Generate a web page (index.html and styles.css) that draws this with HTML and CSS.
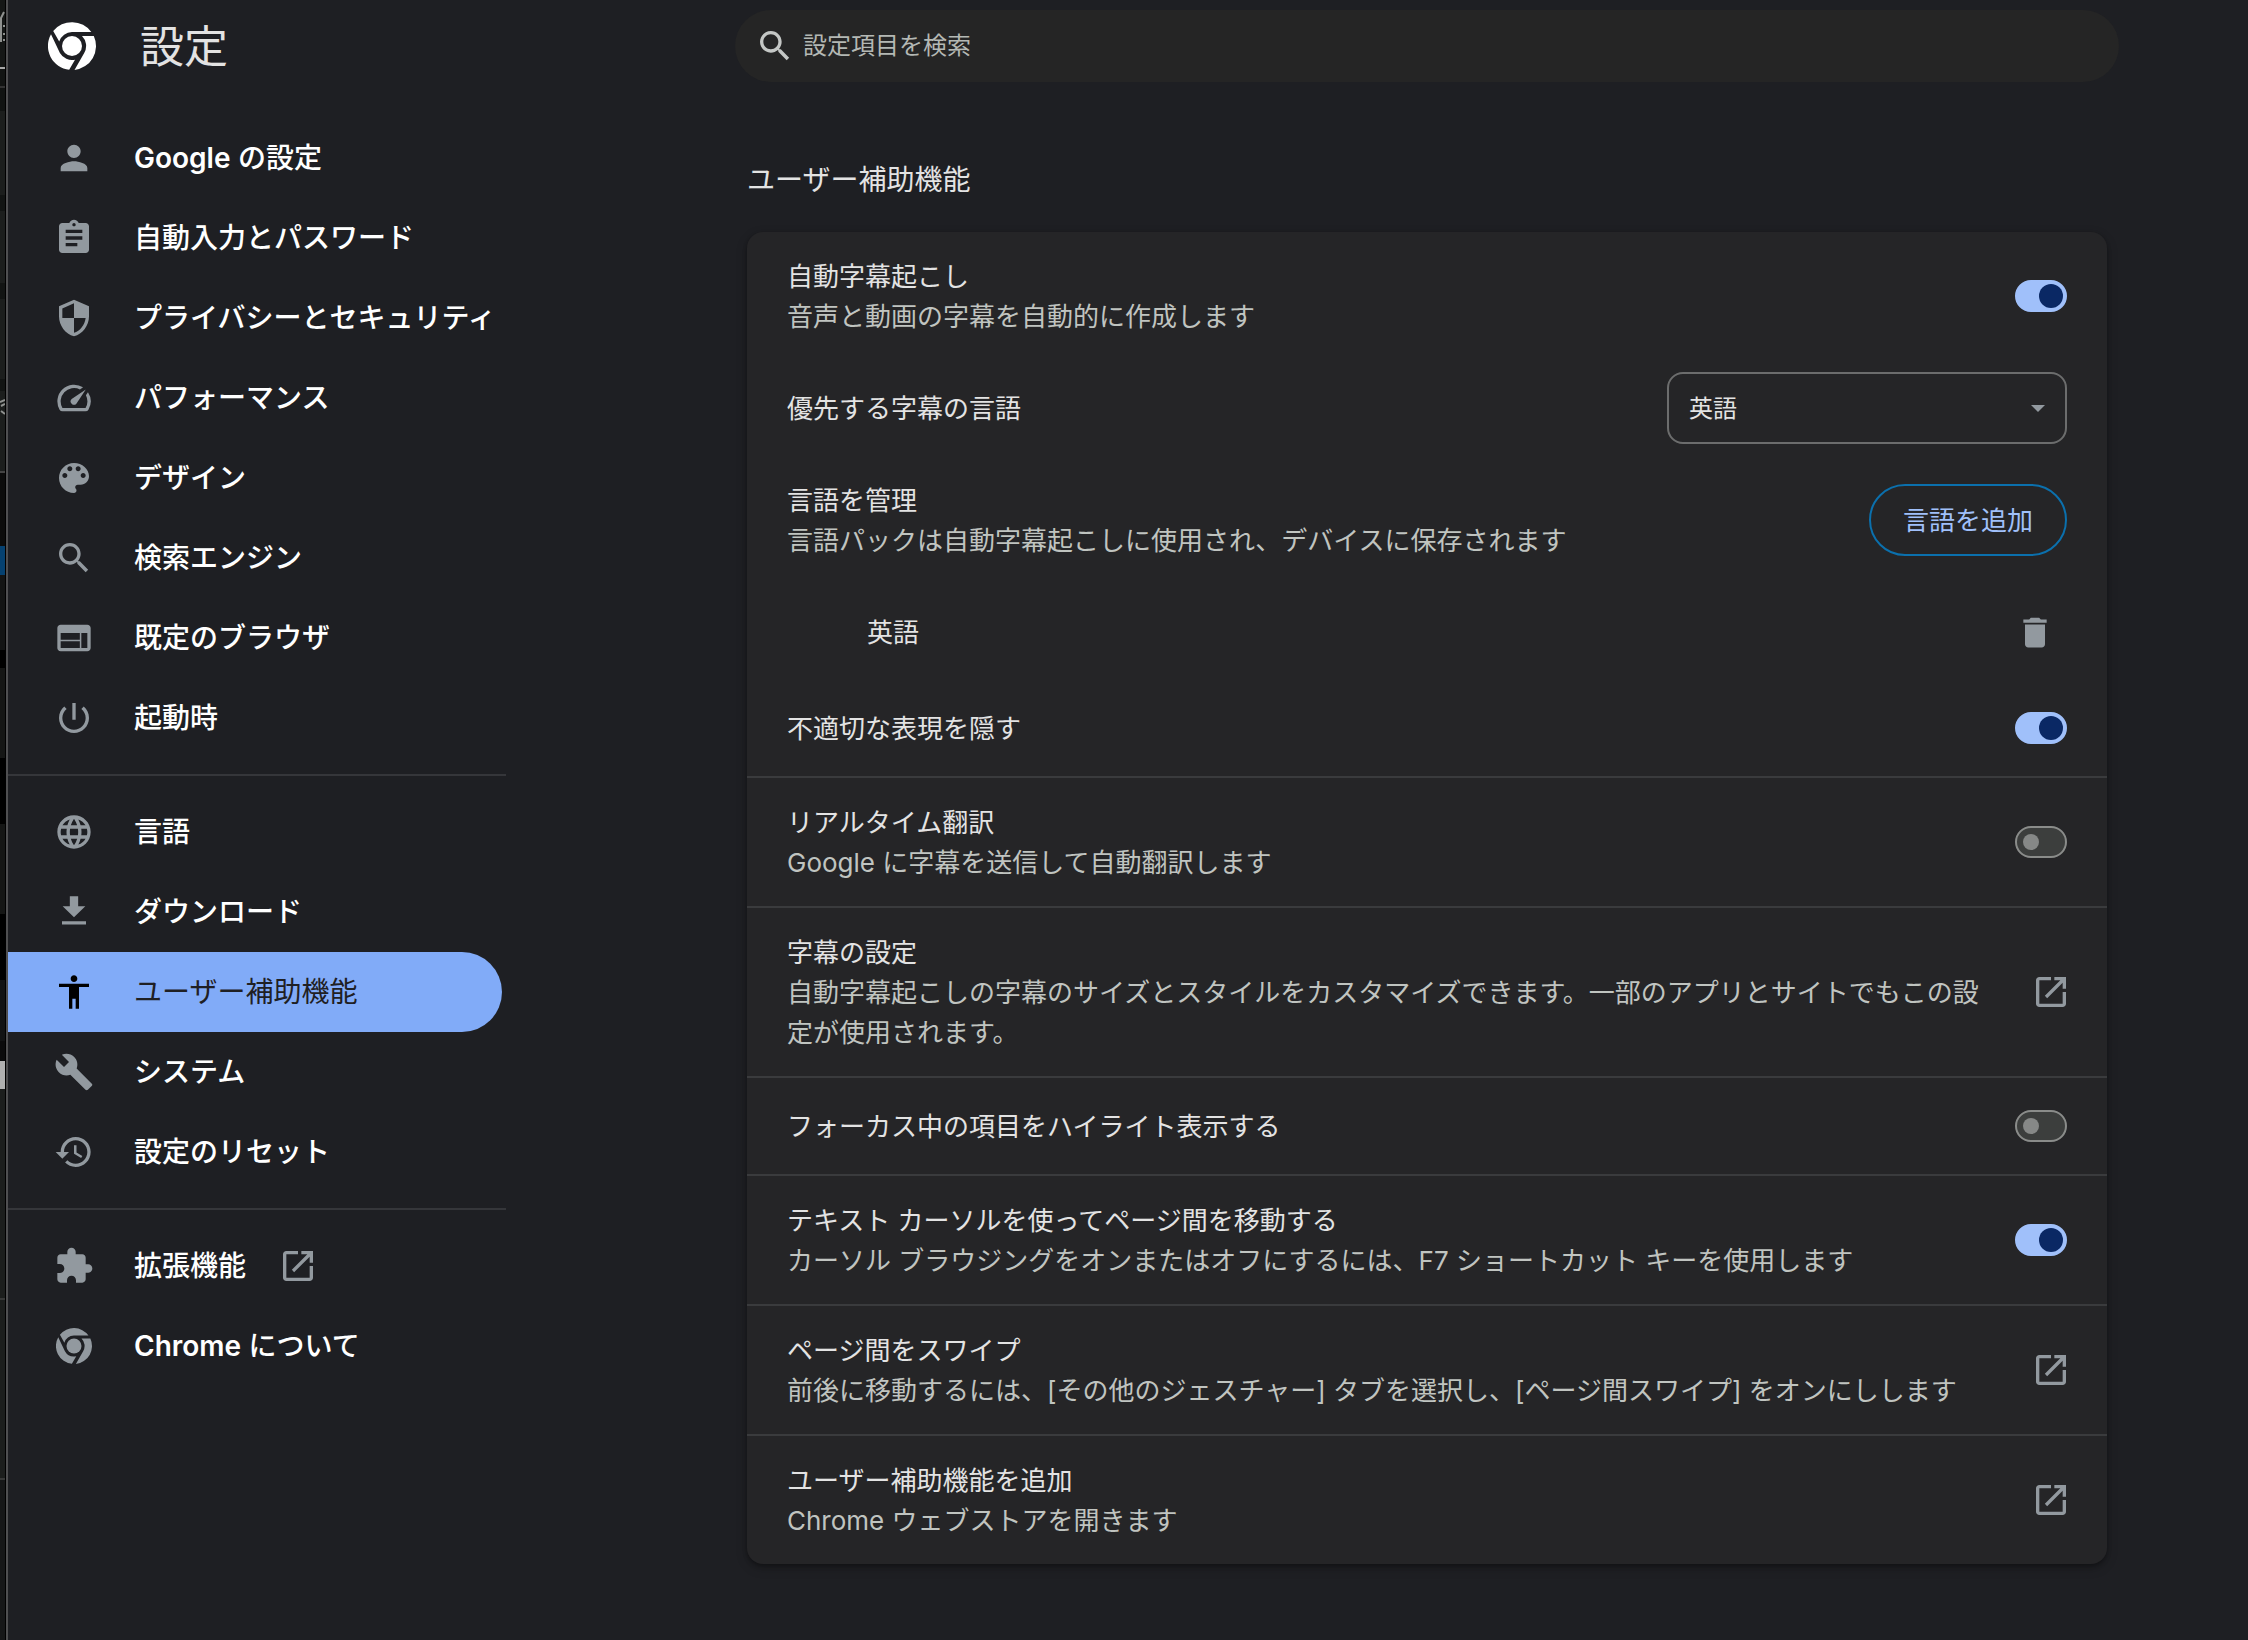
FILE: index.html
```html
<!DOCTYPE html>
<html lang="ja">
<head>
<meta charset="utf-8">
<title>設定 - ユーザー補助機能</title>
<link rel="stylesheet" href="styles.css">
</head>
<body>
<svg class="symbols" aria-hidden="true">
  <symbol id="i-open" viewBox="0 0 24 24"><path d="M5 21q-.825 0-1.412-.587Q3 19.825 3 19V5q0-.825.588-1.413Q4.175 3 5 3h7v2H5v14h14v-7h2v7q0 .825-.587 1.413Q19.825 21 19 21Zm4.700-5.300-1.400-1.400L17.600 5H14V3h7v7h-2V6.400Z"/></symbol>
  <symbol id="i-search" viewBox="0 0 24 24"><path d="M15.500 14h-.790l-.280-.270C15.410 12.590 16 11.110 16 9.500 16 5.910 13.090 3 9.500 3S3 5.910 3 9.500 5.910 16 9.500 16c1.610 0 3.090-.590 4.230-1.570l.270.280v.790l5 4.990L20.490 19l-4.990-5zm-6 0C7.010 14 5 11.990 5 9.500S7.010 5 9.500 5 14 7.010 14 9.500 11.990 14 9.500 14z"/></symbol>
  <symbol id="i-chrome" viewBox="0 0 48 48">
    <circle cx="24" cy="24" r="10"/>
    <path d="M5.200 9.100A24 24 0 0 1 43.300 10H24A14 14 0 0 0 11.200 19.500Z"/>
    <path d="M3 12.200 11.900 31A14 14 0 0 0 27 37.700L21.200 47.800A24 24 0 0 1 3 12.200Z"/>
    <path d="M34 14H45.800A24 24 0 0 1 26.500 47.900L36.200 31A14 14 0 0 0 34 14Z"/>
  </symbol>
</svg>
<div class="window">
  <div class="backdrop" aria-hidden="true">
    <svg width="5" height="440" viewBox="0 0 5 440"><path d="M0 20 4 12M1 18V42M3 26H5M3 34H5M3 40H5M0 402 5 400M1 406 5 404M1 411 5 414" fill="none" stroke="#8f918f" stroke-width="2"/></svg>
  </div>
  <div class="page">
    <aside class="sidebar">
      <header class="brand">
        <svg class="logo"><use href="#i-chrome"/></svg>
        <h1>設定</h1>
      </header>
      <nav class="menu">
        <a href="#google"><svg viewBox="0 0 24 24"><path d="M12 12c2.210 0 4-1.790 4-4s-1.790-4-4-4-4 1.790-4 4 1.790 4 4 4zm0 2c-2.670 0-8 1.340-8 4v2h16v-2c0-2.660-5.330-4-8-4z"/></svg><span><b>Google</b> の設定</span></a>
        <a href="#autofill"><svg viewBox="0 0 24 24"><path d="M19 3h-4.180C14.400 1.840 13.300 1 12 1c-1.300 0-2.400.840-2.820 2H5c-1.100 0-2 .900-2 2v14c0 1.100.900 2 2 2h14c1.100 0 2-.900 2-2V5c0-1.100-.900-2-2-2zm-7 0c.550 0 1 .450 1 1s-.450 1-1 1-1-.450-1-1 .450-1 1-1zm2 14H7v-2h7v2zm3-4H7v-2h10v2zm0-4H7V7h10v2z"/></svg>自動入力とパスワード</a>
        <a href="#privacy"><svg viewBox="0 0 24 24"><path d="M12 1 3 5v6c0 5.550 3.840 10.740 9 12 5.160-1.260 9-6.450 9-12V5ZM5 6.300l7-3.100V12H5ZM12 12h7c-.53 4.100-3.300 7.800-7 8.900Z" fill-rule="evenodd"/></svg>プライバシーとセキュリティ</a>
        <a href="#performance"><svg viewBox="0 0 24 24"><path d="m20.380 8.570-1.230 1.850a8 8 0 0 1-.220 7.580H5.070A8 8 0 0 1 15.580 6.850l1.850-1.230A10 10 0 0 0 3.350 19a2 2 0 0 0 1.720 1h13.850a2 2 0 0 0 1.740-1 10 10 0 0 0-.270-10.440zm-9.790 6.840a2 2 0 0 0 2.830 0l5.660-8.490-8.490 5.660a2 2 0 0 0 0 2.830z"/></svg>パフォーマンス</a>
        <a href="#appearance"><svg viewBox="0 0 24 24"><path d="M12 3c-4.970 0-9 4.030-9 9s4.030 9 9 9c.830 0 1.500-.670 1.500-1.500 0-.390-.150-.740-.390-1.010-.230-.260-.380-.610-.380-.990 0-.830.670-1.500 1.500-1.500H16c2.760 0 5-2.240 5-5 0-4.420-4.030-8-9-8zm-5.500 9c-.830 0-1.500-.670-1.500-1.500S5.670 9 6.500 9 8 9.670 8 10.500 7.330 12 6.500 12zm3-4C8.670 8 8 7.330 8 6.500S8.670 5 9.500 5s1.500.670 1.500 1.500S10.330 8 9.500 8zm5 0c-.830 0-1.500-.670-1.500-1.500S13.670 5 14.500 5s1.500.670 1.500 1.500S15.330 8 14.500 8zm3 4c-.830 0-1.500-.670-1.500-1.500S16.670 9 17.500 9s1.500.670 1.500 1.500-.670 1.500-1.500 1.500z"/></svg>デザイン</a>
        <a href="#search"><svg><use href="#i-search"/></svg>検索エンジン</a>
        <a href="#browser"><svg viewBox="0 0 24 24"><path d="M20 4H4c-1.100 0-1.990.900-1.990 2L2 18c0 1.100.900 2 2 2h16c1.100 0 2-.900 2-2V6c0-1.100-.900-2-2-2zM15.500 18H4v-4h11.500v4zm0-4.900H4V9h11.500v4.100zM20 18h-3.600V9H20v9z"/></svg>既定のブラウザ</a>
        <a href="#startup"><svg viewBox="0 0 24 24"><path d="M13 3h-2v10h2V3zm4.830 2.170-1.420 1.420C17.990 7.860 19 9.810 19 12c0 3.870-3.130 7-7 7s-7-3.130-7-7c0-2.190 1.010-4.140 2.580-5.420L6.170 5.170C4.230 6.820 3 9.260 3 12c0 4.970 4.030 9 9 9s9-4.030 9-9c0-2.740-1.230-5.180-3.170-6.830z"/></svg>起動時</a>
        <hr>
        <a href="#languages"><svg viewBox="0 0 24 24"><path d="M11.990 2C6.470 2 2 6.480 2 12s4.470 10 9.990 10C17.520 22 22 17.520 22 12S17.520 2 11.990 2zm6.930 6h-2.950c-.320-1.250-.780-2.450-1.380-3.560 1.840.630 3.370 1.910 4.330 3.560zM12 4.040c.830 1.200 1.480 2.530 1.910 3.960h-3.820c.430-1.430 1.080-2.760 1.910-3.960zM4.260 14C4.100 13.360 4 12.690 4 12s.100-1.360.260-2h3.380c-.080.660-.140 1.320-.140 2 0 .680.060 1.340.140 2H4.260zm.820 2h2.950c.320 1.250.780 2.450 1.380 3.560-1.840-.630-3.370-1.900-4.330-3.560zm2.950-8H5.080c.960-1.660 2.490-2.930 4.330-3.560C8.810 5.550 8.350 6.750 8.030 8zM12 19.960c-.830-1.200-1.480-2.530-1.910-3.960h3.820c-.430 1.430-1.080 2.760-1.910 3.960zM14.340 14H9.660c-.090-.660-.160-1.320-.160-2 0-.680.070-1.350.160-2h4.680c.090.650.160 1.320.160 2 0 .680-.070 1.340-.160 2zm.250 5.560c.600-1.110 1.060-2.310 1.380-3.560h2.950c-.960 1.650-2.490 2.930-4.330 3.560zM16.360 14c.080-.660.140-1.320.140-2 0-.680-.060-1.340-.140-2h3.380c.160.640.260 1.310.260 2s-.100 1.360-.260 2h-3.380z"/></svg>言語</a>
        <a href="#downloads"><svg viewBox="0 0 24 24"><path d="M18.800 8.500H14.500V2.500h-5v6H5.200L12 15.200zM4.800 17.500h14.400v2H4.800z"/></svg>ダウンロード</a>
        <a href="#accessibility" class="selected" aria-current="page"><svg viewBox="0 0 24 24"><path d="M12 2c1.100 0 2 .900 2 2s-.900 2-2 2-2-.900-2-2 .900-2 2-2zm9 7h-6v13h-2v-6h-2v6H9V9H3V7h18v2z"/></svg>ユーザー補助機能</a>
        <a href="#system"><svg viewBox="0 0 24 24"><path d="m22.700 19-9.100-9.100c.900-2.300.400-5-1.500-6.900-2-2-5-2.400-7.400-1.300L9 6 6 9 1.600 4.700C.400 7.100.900 10.100 2.900 12.100c1.900 1.900 4.600 2.400 6.900 1.500l9.100 9.100c.400.400 1 .400 1.400 0l2.300-2.300c.500-.400.500-1.100.100-1.400z"/></svg>システム</a>
        <a href="#reset"><svg viewBox="0 0 24 24"><path d="M13 3c-4.970 0-9 4.030-9 9H1l3.890 3.890.070.140L9 12H6c0-3.870 3.130-7 7-7s7 3.130 7 7-3.130 7-7 7c-1.930 0-3.680-.790-4.940-2.060l-1.420 1.420C8.270 19.990 10.510 21 13 21c4.970 0 9-4.030 9-9s-4.030-9-9-9zm-1 5v5l4.280 2.540.720-1.210-3.500-2.080V8H12z"/></svg>設定のリセット</a>
        <hr>
        <a href="#extensions"><svg viewBox="0 0 24 24"><path d="M20.500 11H19V7c0-1.100-.900-2-2-2h-4V3.500C13 2.120 11.880 1 10.500 1S8 2.120 8 3.500V5H4c-1.100 0-1.990.900-1.990 2v3.800H3.500c1.490 0 2.700 1.210 2.700 2.700s-1.210 2.700-2.700 2.700H2V20c0 1.100.900 2 2 2h3.800v-1.500c0-1.490 1.210-2.700 2.700-2.700 1.490 0 2.700 1.210 2.700 2.700V22H17c1.100 0 2-.900 2-2v-4h1.500c1.380 0 2.500-1.120 2.500-2.500S21.880 11 20.500 11z"/></svg>拡張機能<svg class="trailing"><use href="#i-open"/></svg></a>
        <a href="#about"><svg class="small-logo"><use href="#i-chrome"/></svg><span><b>Chrome</b> について</span></a>
      </nav>
    </aside>

    <main class="content">
      <label class="search">
        <svg><use href="#i-search"/></svg>
        <input type="search" placeholder="設定項目を検索" aria-label="設定項目を検索">
      </label>
      <h2>ユーザー補助機能</h2>
      <section class="card">
        <div class="row">
          <label class="text" for="captions"><span>自動字幕起こし</span><small>音声と動画の字幕を自動的に作成します</small></label>
          <input class="toggle" type="checkbox" role="switch" id="captions" checked>
        </div>
        <div class="row">
          <label class="text" for="caption-language">優先する字幕の言語</label>
          <div class="select">
            <select id="caption-language"><option>英語</option></select>
            <svg viewBox="0 0 14 7"><path d="M0 0H14L7 7Z"/></svg>
          </div>
        </div>
        <div class="row">
          <div class="text"><span>言語を管理</span><small>言語パックは自動字幕起こしに使用され、デバイスに保存されます</small></div>
          <button class="outlined" type="button">言語を追加</button>
        </div>
        <div class="row nested">
          <div class="text">英語</div>
          <button class="icon-button delete" type="button" aria-label="英語を削除"><svg viewBox="0 0 24 24"><path d="M6 19.300c0 1.100.900 2 2 2h8c1.100 0 2-.900 2-2V7.500H6zM19 4.500h-3.500l-1-1h-5l-1 1H5v2h14z"/></svg></button>
        </div>
        <div class="row">
          <label class="text" for="profanity">不適切な表現を隠す</label>
          <input class="toggle" type="checkbox" role="switch" id="profanity" checked>
        </div>
        <div class="row divided">
          <label class="text" for="translate"><span>リアルタイム翻訳</span><small>Google に字幕を送信して自動翻訳します</small></label>
          <input class="toggle" type="checkbox" role="switch" id="translate">
        </div>
        <div class="row divided">
          <div class="text"><span>字幕の設定</span><small>自動字幕起こしの字幕のサイズとスタイルをカスタマイズできます。一部のアプリとサイトでもこの設定が使用されます。</small></div>
          <button class="icon-button" type="button" aria-label="字幕の設定"><svg><use href="#i-open"/></svg></button>
        </div>
        <div class="row divided">
          <label class="text" for="focus">フォーカス中の項目をハイライト表示する</label>
          <input class="toggle" type="checkbox" role="switch" id="focus">
        </div>
        <div class="row divided">
          <label class="text" for="caret"><span>テキスト カーソルを使ってページ間を移動する</span><small>カーソル ブラウジングをオンまたはオフにするには、F7 ショートカット キーを使用します</small></label>
          <input class="toggle" type="checkbox" role="switch" id="caret" checked>
        </div>
        <div class="row divided">
          <div class="text"><span>ページ間をスワイプ</span><small>前後に移動するには、[その他のジェスチャー] タブを選択し、[ページ間スワイプ] をオンにしします</small></div>
          <button class="icon-button" type="button" aria-label="ページ間をスワイプ"><svg><use href="#i-open"/></svg></button>
        </div>
        <div class="row divided">
          <div class="text"><span>ユーザー補助機能を追加</span><small>Chrome ウェブストアを開きます</small></div>
          <button class="icon-button" type="button" aria-label="ユーザー補助機能を追加"><svg><use href="#i-open"/></svg></button>
        </div>
      </section>
    </main>
  </div>
</div>
</body>
</html>
```
FILE: styles.css
```css
:root {
  --page: #1e1f23;
  --card: #252527;
  --line: #3a3b3d;
  --icon: #92999f;
  --text: #e3e3e3;
  --text-muted: #c0c4c0;
  --accent: #a0c0fa;
}

* { box-sizing: border-box; }

body {
  margin: 0;
  background: var(--page);
  color: var(--text);
  font: 26px/40px Inter, "Noto Sans CJK JP", sans-serif;
}

svg { display: block; flex: none; fill: currentColor; }
.symbols { position: absolute; width: 0; height: 0; }
input, select, button { font: inherit; color: inherit; }

.window { display: flex; min-height: 100vh; }

/* Sliver of the window that lies behind this one */
.backdrop {
  flex: none;
  width: 6px;
  border-right: 1px solid #000;
  background: linear-gradient(
    #151716 67px, #a8a8a8 67px 69px, #121413 69px 86px, #333 86px 88px,
    #111312 88px 111px, #1c1e1d 111px 195px, #121413 195px 211px,
    #1c1e1d 211px 283px, #121413 283px 299px, #1c1e1d 299px 379px,
    #121413 379px 391px, #1c1e1d 391px 471px, #444 471px 473px,
    #0c0c0c 473px 546px, #054170 546px 575px, #131414 575px 650px,
    #000 650px 668px, #151615 668px 758px, #000 758px 824px,
    #151615 824px 914px, #000 914px 980px, #121314 980px 1041px,
    #0b0b0c 1041px 1061px, #b0b0b0 1061px 1089px, #1c1e1d 1089px 1298px,
    #383938 1298px 1300px, #1c1e1d 1300px 1478px, #383938 1478px 1480px,
    #161718 1480px);
}

.page {
  flex: 1;
  min-width: 0;
  display: flex;
  border-left: 2px solid #4f4f51;
}

.sidebar { flex: none; width: 498px; }

.brand {
  display: flex;
  align-items: center;
  gap: 44px;
  height: 92px;
  margin-bottom: 26px;
  padding-left: 40px;
}
.brand h1 { margin: 0; padding-top: 2px; font-size: 44px; font-weight: 400; line-height: 64px; }
.logo { width: 48px; height: 48px; color: #fff; }

.menu { font-size: 28px; font-weight: 500; }
.menu b { font-weight: 600; }
.menu a {
  display: flex;
  align-items: center;
  gap: 40px;
  height: 80px;
  margin-right: 4px;
  padding-left: 46px;
  border-radius: 0 40px 40px 0;
  color: #fff;
  text-decoration: none;
}
.menu svg { width: 40px; height: 40px; color: var(--icon); }
.menu .small-logo { padding: 2px; }
.menu hr { height: 2px; margin: 16px 0; border: 0; background: #35363a; }
.menu .selected { background: #81abf8; color: #1f2024; font-weight: 400; }
.menu .selected svg { color: #000; }
.menu .trailing { margin-left: -8px; }

.content { flex: 1; min-width: 0; padding: 10px 141px 75px 241px; }

.search {
  display: flex;
  align-items: center;
  gap: 8px;
  height: 72px;
  margin: 0 -12px;
  padding: 0 20px;
  border-radius: 36px;
  background: #252525;
  color: #c4c7c5;
}
.search svg { width: 40px; height: 40px; }
.search input {
  flex: 1;
  min-width: 0;
  padding: 0;
  border: 0;
  outline: 0;
  background: none;
  font-size: 24px;
}
.search input::placeholder { color: #b4b8b4; opacity: 1; }

h2 { margin: 78px 0 32px; font-size: 28px; font-weight: 400; line-height: 40px; }

.card {
  border-radius: 16px;
  background: var(--card);
  box-shadow: 0 2px 4px rgba(0, 0, 0, .3), 0 4px 12px rgba(0, 0, 0, .2);
}

.row {
  display: flex;
  align-items: center;
  gap: 40px;
  min-height: 96px;
  padding: 0 40px;
}
.row.divided { box-sizing: content-box; border-top: 2px solid var(--line); }
.row.nested { padding-left: 120px; }

.text { flex: 1; min-width: 0; padding: 25px 0 23px; }
.text span, .text small { display: block; }
.text small { color: var(--text-muted); font-size: 26px; }

.toggle {
  appearance: none;
  flex: none;
  display: flex;
  align-items: center;
  width: 52px;
  height: 32px;
  margin: 0;
  padding: 0 6px;
  border: 2px solid #8a8c8a;
  border-radius: 16px;
  background: #3c3e3d;
}
.toggle::before { content: ""; width: 16px; height: 16px; border-radius: 50%; background: #868887; }
.toggle:checked { justify-content: flex-end; padding: 0 2px; border-color: var(--accent); background: var(--accent); }
.toggle:checked::before { width: 24px; height: 24px; background: #0a2864; }

.select { display: grid; align-items: center; width: 400px; }
.select select, .select svg { grid-area: 1 / 1; }
.select select {
  appearance: none;
  height: 72px;
  padding: 2px 20px 0;
  border: 2px solid #6c6d6d;
  border-radius: 16px;
  background: none;
  font-size: 24px;
}
.select svg { justify-self: end; width: 14px; height: 7px; margin-right: 22px; color: var(--icon); pointer-events: none; }

.outlined {
  height: 72px;
  padding: 2px 32px 0;
  border: 2px solid #0b70ad;
  border-radius: 36px;
  background: none;
  color: var(--accent);
}

.icon-button {
  flex: none;
  margin: 0 -4px 0 0;
  padding: 0;
  border: 0;
  background: none;
  color: var(--icon);
}
.icon-button.delete { margin-right: 12px; }
.icon-button svg { width: 40px; height: 40px; }
```
